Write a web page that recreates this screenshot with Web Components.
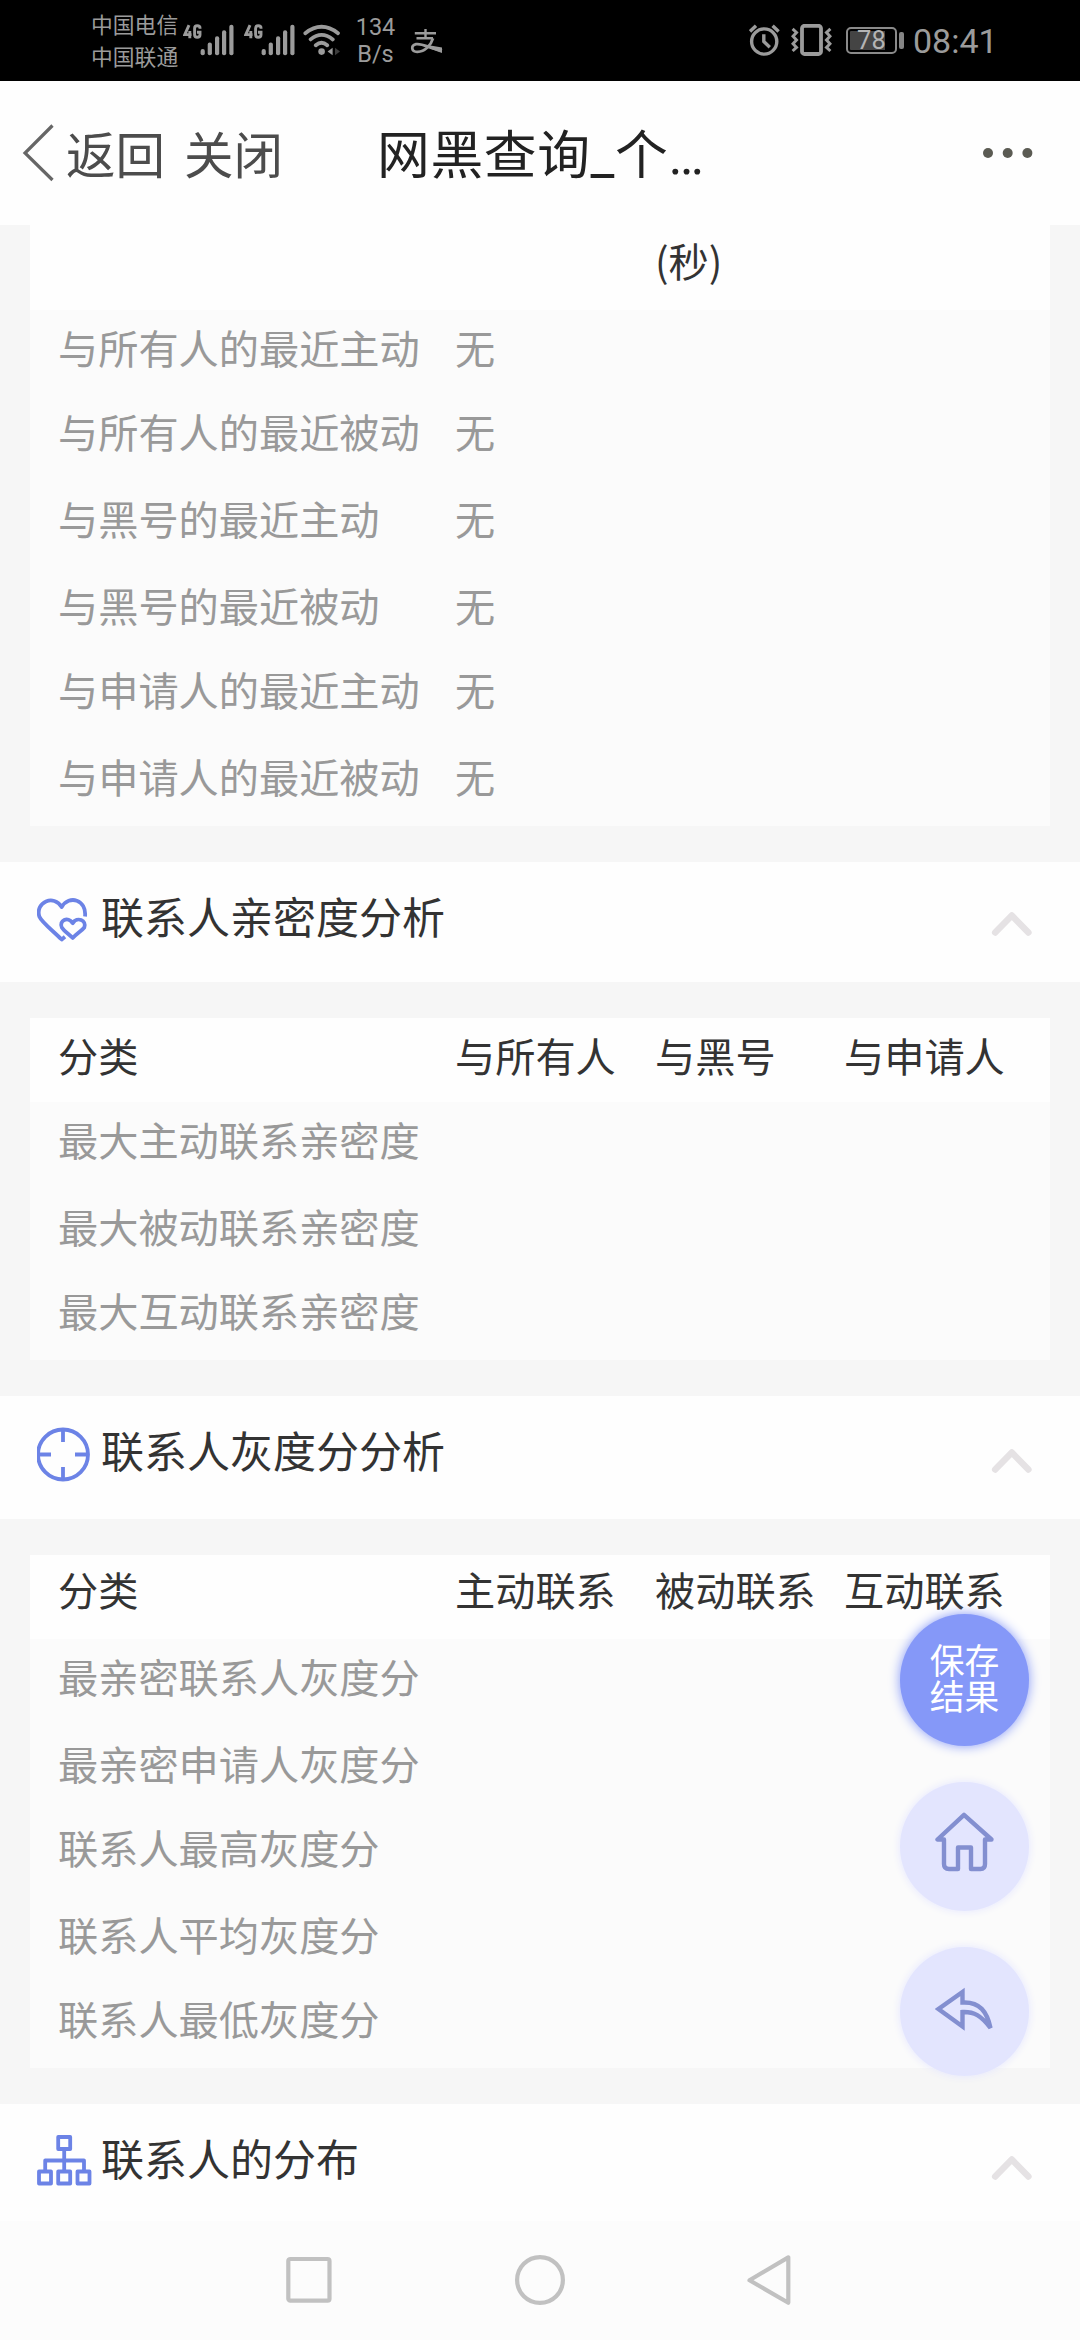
<!DOCTYPE html>
<html lang="zh-CN">
<head>
<meta charset="utf-8">
<title>网黑查询</title>
<style>
html,body{margin:0;padding:0}
body{width:1080px;height:2340px;overflow:hidden;background:#f6f6f6;font-family:"Noto Sans CJK SC",sans-serif}
</style>
</head>
<body>
<phone-screen>
  <status-bar slot="top"></status-bar>
  <title-bar slot="top"><span slot="back">返回</span><span slot="close">关闭</span>网黑查询_个…</title-bar>

  <data-card style="--gap-top:0px">
    <data-row head style="--h:85px;--lh:69px"><span></span><span></span><span>(秒)</span><span></span></data-row>
    <data-row style="--h:84px"><span>与所有人的最近主动</span><span>无</span></data-row>
    <data-row style="--h:87px"><span>与所有人的最近被动</span><span>无</span></data-row>
    <data-row style="--h:87px"><span>与黑号的最近主动</span><span>无</span></data-row>
    <data-row style="--h:84px"><span>与黑号的最近被动</span><span>无</span></data-row>
    <data-row style="--h:87px"><span>与申请人的最近主动</span><span>无</span></data-row>
    <data-row style="--h:87px"><span>与申请人的最近被动</span><span>无</span></data-row>
  </data-card>

  <section-title icon="heart" style="--h:120px;--chev:49px;--icon-top:36px">联系人亲密度分析</section-title>
  <data-card>
    <data-row head><span>分类</span><span>与所有人</span><span>与黑号</span><span>与申请人</span></data-row>
    <data-row style="--h:87px"><span>最大主动联系亲密度</span></data-row>
    <data-row style="--h:84px"><span>最大被动联系亲密度</span></data-row>
    <data-row style="--h:87px"><span>最大互动联系亲密度</span></data-row>
  </data-card>

  <section-title icon="target" style="--h:123px;--chev:52px;--icon-top:31px">联系人灰度分分析</section-title>
  <data-card>
    <data-row head style="--lh:67px"><span>分类</span><span>主动联系</span><span>被动联系</span><span>互动联系</span></data-row>
    <data-row style="--h:87px"><span>最亲密联系人灰度分</span></data-row>
    <data-row style="--h:84px"><span>最亲密申请人灰度分</span></data-row>
    <data-row style="--h:87px"><span>联系人最高灰度分</span></data-row>
    <data-row style="--h:84px"><span>联系人平均灰度分</span></data-row>
    <data-row style="--h:87px"><span>联系人最低灰度分</span></data-row>
  </data-card>

  <section-title icon="tree" style="--h:117px;--chev:51px;--icon-top:30px">联系人的分布</section-title>

  <float-actions slot="float">保存<br>结果</float-actions>
  <system-nav slot="bottom"></system-nav>
</phone-screen>

<script>
const define = (name, html, setup) => {
  const tpl = document.createElement('template');
  tpl.innerHTML = html;
  customElements.define(name, class extends HTMLElement {
    constructor() {
      super();
      this.attachShadow({mode: 'open'}).append(tpl.content.cloneNode(true));
    }
    connectedCallback() { if (setup) setup(this, this.shadowRoot); }
  });
};

define('phone-screen', `
<style>
:host{display:flex;flex-direction:column;position:relative;width:1080px;height:2340px;overflow:hidden;background:#f6f6f6}
main{flex:1;min-height:0;overflow:hidden}
</style>
<slot name="top"></slot><main><slot></slot></main><slot name="bottom"></slot><slot name="float"></slot>`);

define('status-bar', `
<style>
:host{display:flex;box-sizing:border-box;height:81px;background:#000;color:#9b9b9b;padding:0 88px 0 91px;align-items:flex-start}
svg{display:block;flex:none}
.carrier{font-size:21.8px;line-height:32px;margin-top:8px;width:92px;white-space:nowrap}
.sig{margin-top:24px;width:61px}
.wifi{margin:24px 0 0 -2px;width:38px}
.rate{font:23.5px/27px Roboto,sans-serif;margin:14px 0 0 14px;width:41px;text-align:center;white-space:nowrap}
.pay{margin:28px 0 0 14px}
.right{display:flex;margin-left:auto;align-items:flex-start}
.alarm{margin-top:24px}.vib{margin:24px 0 0 11px}
.bat{display:flex;margin:27px 0 0 14px;align-items:center}
.cell{box-sizing:border-box;width:51px;height:27px;border:2px solid #8a8a8a;border-radius:5px;padding:2px;font:25.5px/20px Roboto,sans-serif;text-align:center;color:#b4b4b4;background:linear-gradient(90deg,#444 35px,#000 35px) content-box}
.cell b{display:block;font-weight:400;letter-spacing:.2px;margin-top:-1px}
.nub{width:5px;height:17px;background:#858585;border-radius:2px;margin-left:2px}
.time{font:34px/40px Roboto,sans-serif;margin:21px 0 0 9px;width:79px;white-space:nowrap}
</style>
<div class="carrier">中国电信<br>中国联通</div>
<svg class="sig" width="61" height="34"><g fill="none" stroke="#9b9b9b" stroke-width="2.9"><path d="M6 1.2L1.8 10.6H8.6M6.8 7V14.3M17 4.7V4Q17 1.7 14.2 1.7Q11.6 1.7 11.6 4.4V10.8Q11.6 13.3 14.2 13.3Q17 13.3 17 10.8V8.2H14"/></g><g fill="#9b9b9b"><rect x="17.6" y="25" width="4.2" height="6.3" rx="2"/><rect x="24.7" y="18.6" width="4.2" height="12.7" rx="2"/><rect x="32" y="12.3" width="4.2" height="19" rx="2"/><rect x="39" y="6.3" width="4.2" height="25" rx="2"/><rect x="46.3" y=".7" width="4.2" height="30.6" rx="2"/></g></svg>
<svg class="sig" width="61" height="34"><g fill="none" stroke="#9b9b9b" stroke-width="2.9"><path d="M6 1.2L1.8 10.6H8.6M6.8 7V14.3M17 4.7V4Q17 1.7 14.2 1.7Q11.6 1.7 11.6 4.4V10.8Q11.6 13.3 14.2 13.3Q17 13.3 17 10.8V8.2H14"/></g><g fill="#9b9b9b"><rect x="17.6" y="25" width="4.2" height="6.3" rx="2"/><rect x="24.7" y="18.6" width="4.2" height="12.7" rx="2"/><rect x="32" y="12.3" width="4.2" height="19" rx="2"/><rect x="39" y="6.3" width="4.2" height="25" rx="2"/><rect x="46.3" y=".7" width="4.2" height="30.6" rx="2"/></g></svg>
<svg class="wifi" width="38" height="34"><g fill="none" stroke="#9b9b9b" stroke-width="3.8" stroke-linecap="round"><path d="M2.3 9.2Q18.5-3.6 35 9.2M7.6 15.4Q18.5 6.4 29.8 15.4M12.8 21.2Q18.5 16.4 24.2 21.2"/></g><circle cx="18.6" cy="27.6" r="3.3" fill="#9b9b9b"/><path d="M29.6 23.8V31.2L24.6 27.5Z" fill="#9b9b9b"/><path d="M32 23.8V31.2L37 27.5Z" fill="#3c3c3c"/></svg>
<div class="rate">134<br>B/s</div>
<svg class="pay" width="33" height="28" fill="none" stroke="#9b9b9b"><path stroke-width="2.4" d="M15.5 1V10M4.8 5.2H26M6.5 10.3H23"/><path stroke-width="2.8" d="M23 10.3C21 17 15 23.7 7.5 23.8C1.2 24 .5 17.6 6 16.2C12 14.8 20 20.5 32 22.5"/><path d="M19 17.3L32 19.5V25Q26 23 18 19.5Z" fill="#9b9b9b" stroke="none"/></svg>
<div class="right">
<svg class="alarm" width="31" height="33" fill="none" stroke="#9b9b9b" stroke-width="3.4"><circle cx="15.2" cy="17.5" r="12.6"/><path d="M14.8 10.2V17.5L20.8 23.2M1 7.4L7 1.8M29.6 7.4L23.6 1.8"/></svg>
<svg class="vib" width="41" height="33" fill="none" stroke="#9b9b9b"><rect x="11" y="1.8" width="19" height="28.2" rx="2.5" stroke-width="3.8"/><path stroke-width="3" d="M1.6 4.8L5.5 8.5L2 12.3L5.5 16L2 19.7L5.5 23.4L1.6 27M39.4 4.8L35.5 8.5L39 12.3L35.5 16L39 19.7L35.5 23.4L39.4 27"/></svg>
<div class="bat"><div class="cell"><b>78</b></div><div class="nub"></div></div>
<div class="time">08:41</div>
</div>`);

define('title-bar', `
<style>
:host{display:flex;box-sizing:border-box;height:144px;background:#fefefe;padding:0 47px 0 21px;align-items:flex-start;white-space:nowrap}
svg{display:block;flex:none}
.arrow{margin-top:41px}
.back,.close{font-size:49.5px;line-height:72px;margin-top:36px;color:#4c4c4c}
.back{margin-left:11px;width:118px}
.close{width:193px}
.title{font-family:Roboto,"Noto Sans CJK SC",sans-serif;font-size:52.8px;letter-spacing:.6px;line-height:76px;margin-top:37px;color:#222}
.more{margin:66px 0 0 auto}
</style>
<svg class="arrow" width="34" height="60" fill="none" stroke="#666" stroke-width="3.2"><path d="M31.5 3.5L4 31L31.5 58"/></svg>
<div class="back"><slot name="back"></slot></div><div class="close"><slot name="close"></slot></div>
<div class="title"><slot></slot></div>
<svg class="more" width="51" height="12" fill="#5b5b53"><circle cx="6" cy="6" r="5"/><circle cx="25.7" cy="6" r="5"/><circle cx="45.4" cy="6" r="5"/></svg>`);

define('data-card', `
<style>
:host{display:block;margin:var(--gap-top,36px) 30px 36px;background:#fbfbfb}
</style><slot></slot>`);

define('data-row', `
<style>
:host{display:grid;grid-template-columns:397px 200px 189px 1fr;box-sizing:border-box;height:var(--h,84px);padding-left:28px;font-size:40.2px;line-height:var(--lh,73px);color:#999;white-space:nowrap}
:host([head]){background:#fefefe;color:#333}
</style><slot></slot>`);

const sectionIcons = {
  heart: '<path d="M48 18.5C50 1.5 32 -3.5 24.7 9C17 -4 -2 4 2.3 18.5C4.5 24 15 32 24.7 41.5L28 38.8"/><path d="M35.7 25.2C31 17.5 21.5 23 24.8 29.5C27 33 31 35.5 35.7 40C40 35.5 44.5 33 47.3 29.5C50 22.5 40 18 35.7 25.2Z"/>',
  target: '<circle cx="26" cy="27.5" r="25"/><path d="M26 2V15M26 40V53M1 27.5H14M38 27.5H51"/>',
  tree: '<path d="M21.2 3H33.2V15H21.2ZM2 37.5H14V49.5H2ZM21.2 37.5H33.2V49.5H21.2ZM40.5 37.5H52.5V49.5H40.5ZM27.2 15V37.5M8.2 37.5V26.5H47V37.5"/>'
};
define('section-title', `
<style>
:host{display:flex;box-sizing:border-box;height:var(--h);padding:0 46px 0 37px;background:#fefefe;align-items:flex-start}
svg{display:block;flex:none}
.icon{margin-top:var(--icon-top);stroke:#6c83e6;stroke-width:3.8;fill:none;stroke-linejoin:round}
.text{margin:23px 0 0 8px;font-size:43px;line-height:60px;color:#333;white-space:nowrap}
.chev{margin:var(--chev) 0 0 auto}
</style>
<svg class="icon" width="56" height="56" viewBox="0 0 56 56"></svg>
<div class="text"><slot></slot></div>
<svg class="chev" width="44" height="27" fill="none" stroke="#e5e2e4" stroke-width="6.5" stroke-linecap="round" stroke-linejoin="round"><path d="M5.2 21.5L21.8 4.5L38.4 21.5"/></svg>`,
(host, root) => { root.querySelector('.icon').innerHTML = sectionIcons[host.getAttribute('icon')]; });

define('float-actions', `
<style>
:host{position:absolute;top:1614px;right:51px;display:flex;flex-direction:column;gap:36px}
div{width:129px;height:129px;border-radius:50%;display:flex;align-items:center;justify-content:center;background:#e3e5fe;box-shadow:0 0 9px #e3e5fe}
.save{box-sizing:border-box;height:132px;padding-bottom:7px;background:#8598f8;box-shadow:0 0 12px #8598f8;color:#fff;font-size:34.8px;line-height:36px;text-align:center}
.home{box-sizing:border-box;padding-bottom:9px}
svg{display:block}
</style>
<div class="save"><span><slot></slot></span></div>
<div class="home"><svg width="60" height="60" fill="none" stroke="#838fd0" stroke-width="4.4" stroke-linejoin="round"><path d="M29 2.8L2.5 27.5H9V52Q9 57 14 57H23V35.5H36V57H45.5Q50 57 50 52V27.5H56.5Z"/></svg></div>
<div><svg width="60" height="52" fill="none" stroke="#838fd0" stroke-width="4.4"><path d="M27.5 6V16.5C45 15.5 52 26 55.5 42C46 29.5 39 25.5 27.5 26V40.5L3.5 23Z"/></svg></div>`);

define('system-nav', `
<style>
:host{display:flex;height:119px;background:#fcfcfc;align-items:flex-start;flex:none;padding-left:285px}
svg{display:block;margin-top:33px;fill:none;stroke:#c1c1c1;stroke-width:4.2;stroke-linejoin:round}
.c{margin-left:181px}.t{margin-left:180px}
</style>
<svg width="48" height="52"><rect x="3.3" y="5" width="41.2" height="41.7" rx="2"/></svg>
<svg class="c" width="52" height="52"><circle cx="26" cy="26" r="22.9"/></svg>
<svg class="t" width="48" height="54"><path d="M3.5 26L42.3 3.2V48.6Z" transform="translate(0 .2)"/></svg>`);
</script>
</body>
</html>
